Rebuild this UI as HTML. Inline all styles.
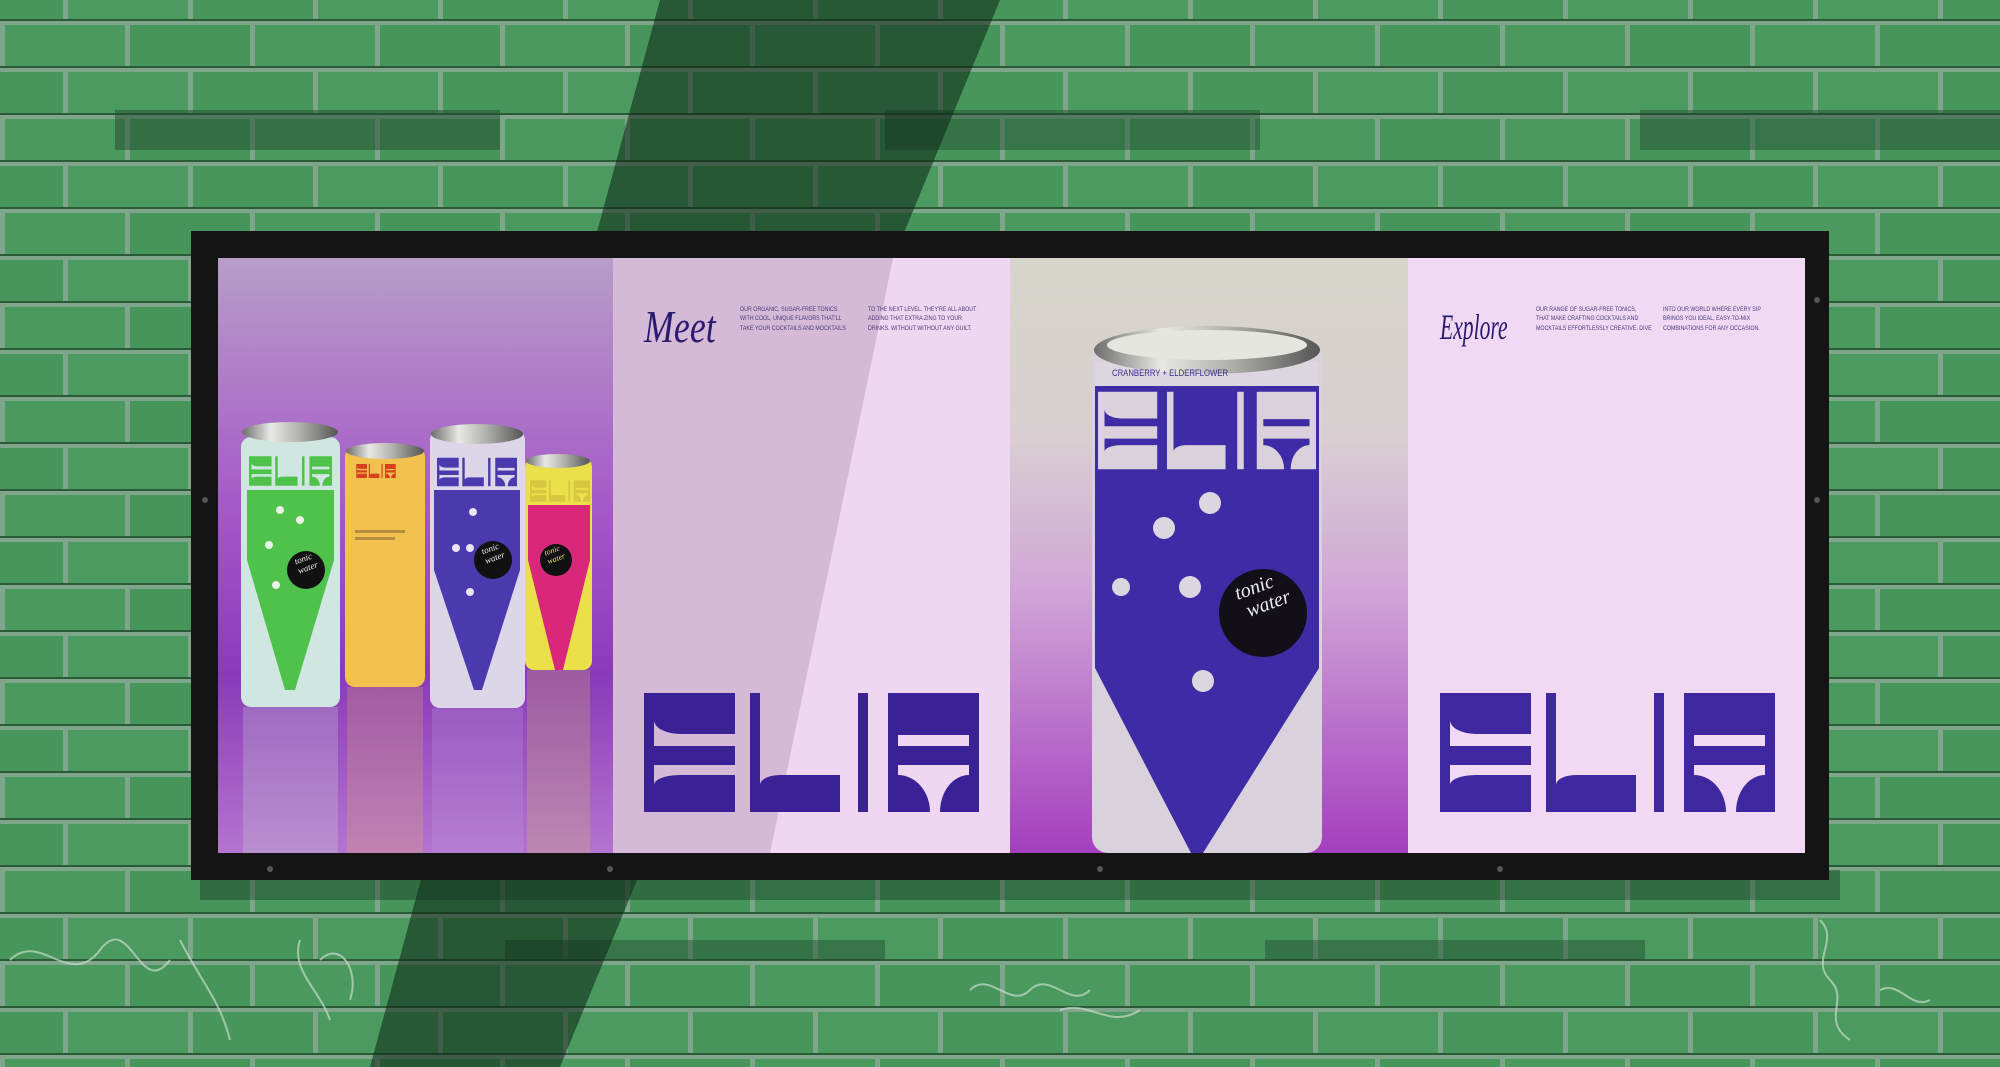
<!DOCTYPE html>
<html><head><meta charset="utf-8">
<style>
*{margin:0;padding:0;box-sizing:border-box}
html,body{width:2000px;height:1067px;overflow:hidden;background:#4a9660}
.abs{position:absolute}
.txt{font-family:"Liberation Sans",sans-serif;font-size:6.2px;line-height:9.3px;color:#4a3a78;letter-spacing:0;white-space:nowrap;transform:scaleX(0.86);transform-origin:0 0}
.script{font-family:"Liberation Serif",serif;font-style:italic;color:#2a1a70;font-weight:normal;transform-origin:0 0;white-space:nowrap}
</style></head><body>
<svg class="abs" style="left:0;top:0" width="2000" height="1067">
<defs>
<pattern id="br" width="250" height="94" patternUnits="userSpaceOnUse" x="-60" y="-25">
<rect width="250" height="94" fill="#7fa58a"/>
<rect x="3" y="3" width="120" height="42" fill="#47975c"/>
<rect x="128" y="3" width="120" height="42" fill="#4b9a60"/>
<rect x="-60" y="50" width="120" height="42" fill="#46955b"/>
<rect x="65" y="50" width="120" height="42" fill="#4a995f"/>
<rect x="190" y="50" width="120" height="42" fill="#46955b"/>
<rect x="0" y="44" width="250" height="2" fill="#2a5a36"/>
<rect x="0" y="91" width="250" height="2" fill="#2a5a36"/>
</pattern>
<symbol id="elia" viewBox="0 0 335 119">
<path fill-rule="evenodd" d="M0,0H91V119H0Z M10,27 A26 14 0 0 0 36 41 H91 V53 H10 Z M10,72 H91 V82 H36 A26 10 0 0 0 10 92 Z"/>
<path d="M106,0 H116 V92 A20 10 0 0 1 136 82 H196 V119 H106 Z"/>
<rect x="214" y="0" width="10" height="119"/>
<path fill-rule="evenodd" d="M244,0H335V119H244Z M254,42H325V53H254Z M254,72 H325 V82 A29 37 0 0 0 296 119 H286 A32 37 0 0 0 254 82 Z"/>
</symbol>
<linearGradient id="p1" x1="0" y1="0" x2="0" y2="1"><stop offset="0" stop-color="#b89dc8"/><stop offset=".45" stop-color="#a454c8"/><stop offset=".7" stop-color="#8a3ab8"/><stop offset="1" stop-color="#b574cf"/></linearGradient>
<linearGradient id="p3" x1="0" y1="0" x2="0" y2="1"><stop offset="0" stop-color="#d6d5ca"/><stop offset=".3" stop-color="#d9cfd2"/><stop offset=".55" stop-color="#d2a7d8"/><stop offset="1" stop-color="#a43fbf"/></linearGradient>
<linearGradient id="silver" x1="0" y1="0" x2="1" y2="0"><stop offset="0" stop-color="#6d6d6d"/><stop offset=".3" stop-color="#e8e8e4"/><stop offset=".6" stop-color="#b0b0ac"/><stop offset="1" stop-color="#555"/></linearGradient>
</defs>
<rect width="2000" height="1067" fill="url(#br)"/>
<rect x="115" y="110" width="385" height="40" fill="#1f4a2c" opacity=".5"/>
<rect x="885" y="110" width="375" height="40" fill="#1f4a2c" opacity=".45"/>
<rect x="1640" y="110" width="360" height="40" fill="#1f4a2c" opacity=".45"/>
<rect x="505" y="940" width="380" height="20" fill="#1f4a2c" opacity=".45"/>
<rect x="1265" y="940" width="380" height="20" fill="#1f4a2c" opacity=".45"/>
<polygon points="660,0 1000,0 560,1067 370,1067" fill="#0c2414" opacity=".55"/>
<rect x="200" y="870" width="1640" height="30" fill="#14331d" opacity=".4"/>
<rect x="191" y="231" width="1638" height="649" fill="#141414"/>
<rect x="218" y="258" width="395" height="595" fill="url(#p1)"/>
<rect x="613" y="258" width="397" height="595" fill="#efd6f1"/>
<rect x="1010" y="258" width="398" height="595" fill="url(#p3)"/>
<rect x="1408" y="258" width="397" height="595" fill="#f1d9f3"/>
<polygon points="613,258 893,258 770,853 613,853" fill="#6a4a70" opacity=".2"/>
<g>
<rect x="241" y="437" width="99" height="270" rx="10" fill="#cfe7e0"/>
<polygon points="247,490 334,490 334,560 295,690 285,690 247,560" fill="#4ec24a"/>
<ellipse cx="290" cy="432" rx="48" ry="10" fill="url(#silver)"/>
<rect x="247" y="452" width="87" height="38" fill="#cfe7e0"/>
<svg x="249" y="455" width="83" height="32"><use href="#elia" fill="#4ec24a"/></svg>
<circle cx="306" cy="570" r="19" fill="#111"/>
<circle cx="280" cy="510" r="4" fill="#e8f0e8"/><circle cx="300" cy="520" r="4" fill="#e8f0e8"/><circle cx="269" cy="545" r="4" fill="#e8f0e8"/><circle cx="276" cy="585" r="4" fill="#e8f0e8"/>
<rect x="243" y="707" width="95" height="146" fill="#c6e0d4" opacity=".25"/>
<rect x="345" y="447" width="80" height="240" rx="10" fill="#f3c24e"/>
<ellipse cx="385" cy="451" rx="39" ry="8" fill="url(#silver)"/>
<svg x="356" y="464" width="40" height="14"><use href="#elia" fill="#d8401e"/></svg>
<rect x="355" y="530" width="50" height="3" fill="#8a6a30" opacity=".6"/>
<rect x="355" y="537" width="40" height="3" fill="#8a6a30" opacity=".6"/>
<rect x="347" y="687" width="76" height="166" fill="#e6b060" opacity=".25"/>
<rect x="430" y="430" width="95" height="278" rx="10" fill="#ddd6e8"/>
<polygon points="434,490 520,490 520,570 482,690 474,690 434,570" fill="#4a3aae"/>
<ellipse cx="477" cy="434" rx="46" ry="10" fill="url(#silver)"/>
<rect x="434" y="450" width="86" height="40" fill="#ddd6e8"/>
<svg x="437" y="456" width="80" height="32"><use href="#elia" fill="#4a3aae"/></svg>
<circle cx="493" cy="560" r="19" fill="#111"/>
<circle cx="473" cy="512" r="4" fill="#e8e4f2"/><circle cx="456" cy="548" r="4" fill="#e8e4f2"/><circle cx="470" cy="548" r="4" fill="#e8e4f2"/><circle cx="470" cy="592" r="4" fill="#e8e4f2"/>
<rect x="432" y="708" width="91" height="145" fill="#b9a0d8" opacity=".25"/>
<rect x="525" y="458" width="67" height="212" rx="9" fill="#e9e04a"/>
<polygon points="528,505 590,505 590,560 563,670 555,670 528,560" fill="#d9287a"/>
<ellipse cx="558" cy="461" rx="32" ry="7" fill="url(#silver)"/>
<svg x="530" y="478" width="60" height="26"><use href="#elia" fill="#d7c640"/></svg>
<circle cx="556" cy="560" r="16" fill="#111"/>
<rect x="527" y="670" width="63" height="183" fill="#d8c060" opacity=".25"/>
</g>
<g>
<rect x="1092" y="340" width="230" height="513" rx="16" fill="#d9d2dc"/>
<polygon points="1095,386 1319,386 1319,668 1203,853 1191,853 1095,668" fill="#3e2ba5"/>
<rect x="1095" y="362" width="224" height="24" fill="#dcd6e0"/>
<svg x="1098" y="391" width="218" height="79"><use href="#elia" fill="#d9d2dc"/></svg>
<ellipse cx="1207" cy="350" rx="113" ry="24" fill="url(#silver)"/>
<ellipse cx="1207" cy="345" rx="100" ry="15" fill="#e6e6e0"/>
<circle cx="1210" cy="503" r="11" fill="#dcd6e0"/><circle cx="1164" cy="528" r="11" fill="#dcd6e0"/>
<circle cx="1121" cy="587" r="9" fill="#dcd6e0"/><circle cx="1190" cy="587" r="11" fill="#dcd6e0"/><circle cx="1203" cy="681" r="11" fill="#dcd6e0"/>
<circle cx="1263" cy="613" r="44" fill="#120f18"/>
</g>
<svg x="644" y="693" width="335" height="119"><use href="#elia" fill="#3a2296"/></svg>
<svg x="1439" y="693" width="337" height="119"><use href="#elia" fill="#3f27a0"/></svg>
<g fill="#555"><circle cx="270" cy="869" r="3"/><circle cx="610" cy="869" r="3"/><circle cx="1100" cy="869" r="3"/><circle cx="1500" cy="869" r="3"/><circle cx="1817" cy="300" r="3"/><circle cx="1817" cy="500" r="3"/><circle cx="205" cy="500" r="3"/></g>
<g fill="none" stroke="#c8dccc" stroke-width="2" opacity=".7">
<path d="M10,960 C40,930 70,990 100,950 S140,1000 170,960 M180,940 c20,40 40,60 50,100 M300,940 c-10,30 20,50 30,80 M320,960 c20,-20 40,10 30,40"/>
<path d="M970,990 c20,-20 40,20 60,0 s40,20 60,0 M1060,1010 c30,-10 50,20 80,0"/>
<path d="M1820,920 c20,20 -10,40 10,60 s-10,40 20,60 M1880,990 c20,-10 30,20 50,10"/>
</g>
</svg>
<div class="abs script" style="left:644px;top:300px;font-size:46px;transform:scaleX(0.78)">Meet</div>
<div class="abs txt" style="left:740px;top:305px">OUR ORGANIC, SUGAR-FREE TONICS<br>WITH COOL, UNIQUE FLAVORS THAT'LL<br>TAKE YOUR COCKTAILS AND MOCKTAILS</div>
<div class="abs txt" style="left:868px;top:305px">TO THE NEXT LEVEL. THEY'RE ALL ABOUT<br>ADDING THAT EXTRA ZING TO YOUR<br>DRINKS. WITHOUT WITHOUT ANY GUILT.</div>
<div class="abs script" style="left:1440px;top:306px;font-size:36px;transform:scaleX(0.6)">Explore</div>
<div class="abs txt" style="left:1536px;top:305px">OUR RANGE OF SUGAR-FREE TONICS,<br>THAT MAKE CRAFTING COCKTAILS AND<br>MOCKTAILS EFFORTLESSLY CREATIVE. DIVE</div>
<div class="abs txt" style="left:1663px;top:305px">INTO OUR WORLD WHERE EVERY SIP<br>BRINGS YOU IDEAL, EASY-TO-MIX<br>COMBINATIONS FOR ANY OCCASION.</div>
<div class="abs script" style="left:1232px;top:585px;font-size:20px;color:#eee;line-height:20px;transform:rotate(-20deg)">tonic<br>&nbsp;water</div>
<div class="abs script" style="left:293px;top:557px;font-size:9px;color:#eee;line-height:10px;transform:rotate(-20deg)">tonic<br>water</div>
<div class="abs script" style="left:480px;top:547px;font-size:9px;color:#eee;line-height:10px;transform:rotate(-20deg)">tonic<br>water</div>
<div class="abs script" style="left:543px;top:549px;font-size:8px;color:#e8e040;line-height:9px;transform:rotate(-20deg)">tonic<br>water</div>
<div class="abs txt" style="left:1112px;top:369px;font-size:9px;color:#3a2a90">CRANBERRY + ELDERFLOWER</div>
</body></html>
